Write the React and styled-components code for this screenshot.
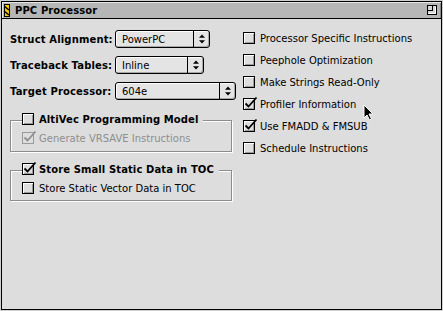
import React from "react";
import styled, { createGlobalStyle } from "styled-components";

const Global = createGlobalStyle`
  html, body { margin: 0; padding: 0; background: #cfcfcf; }
  body { font-family: "DejaVu Sans", sans-serif; font-size: 10px; color: #000; }
  * { box-sizing: border-box; }
`;

const Window = styled.div`
  position: relative;
  margin: 1px;
  width: 441px;
  height: 309px;
  border: 1px solid #000;
  background: #dddddd;
  display: flex;
  flex-direction: column;
`;

const TitleBar = styled.div`
  height: 17px;
  flex: none;
  background: #b6b6b6;
  border-bottom: 1px solid #000;
  box-shadow: inset 1px 1px 0 #e6e6e6, inset -1px 0 0 #8a8a8a;
  display: flex;
  align-items: center;
  padding: 0 4px 0 2px;
`;

const Title = styled.span`
  font-family: "DejaVu Sans", sans-serif;
  font-weight: bold;
  font-size: 10px;
  letter-spacing: 0.1px;
  margin-left: 5px;
  flex: 1;
`;

const Content = styled.div`
  flex: 1;
  display: flex;
  padding-left: 8px;
`;

const LeftCol = styled.div`
  width: 233px;
  padding-top: 11px;
  display: flex;
  flex-direction: column;
`;

const RightCol = styled.div`
  padding-top: 13px;
  display: flex;
  flex-direction: column;
  gap: 10px;
`;

const FormRow = styled.div`
  display: flex;
  align-items: center;
  height: 18px;
  margin-bottom: 8px;
`;

const Label = styled.span`
  width: 105px;
  font-weight: bold;
  font-size: 10px;
  letter-spacing: 0.15px;
  white-space: nowrap;
`;

const Popup = styled.div`
  width: ${(p) => p.$w}px;
  height: 18px;
  border: 1px solid #000;
  border-radius: 3px;
  background: #e4e4e4;
  box-shadow: inset 1px 1px 0 #fff, inset -1px -1px 0 #a8a8a8;
  display: flex;
  align-items: stretch;
`;

const PopupText = styled.span`
  flex: 1;
  padding-left: 6px;
  display: flex;
  align-items: center;
  font-size: 10px;
`;

const PopupArrow = styled.span`
  width: 16px;
  border-left: 1px solid #000;
  display: flex;
  align-items: center;
  justify-content: center;
`;

const Group = styled.div`
  position: relative;
  width: 222px;
  margin-top: ${(p) => p.$mt}px;
  border: 1px solid #8c8c8c;
  box-shadow: inset 1px 1px 0 #fff, 1px 1px 0 #fff;
  padding: 11px 0 ${(p) => p.$pb}px 11px;
`;

const GroupHeader = styled.div`
  position: absolute;
  top: -8px;
  left: 11px;
  background: #dddddd;
  padding-right: 5px;
  display: flex;
  align-items: center;
  gap: 5px;
  font-weight: bold;
  font-size: 10px;
  letter-spacing: 0.1px;
  white-space: nowrap;
`;

const CheckRow = styled.div`
  display: flex;
  align-items: center;
  gap: 5px;
  height: 12px;
  font-size: 10px;
  white-space: nowrap;
  color: ${(p) => (p.$disabled ? "#8e8e8e" : "#000")};
`;

const Box = styled.span`
  position: relative;
  flex: none;
  width: 12px;
  height: 12px;
  border: 1px solid ${(p) => (p.$disabled ? "#9a9a9a" : "#000")};
  background: #dedede;
  box-shadow: ${(p) =>
    p.$disabled ? "none" : "inset 1px 1px 0 #fff, inset -1px -1px 0 #9c9c9c"};
`;

const Tick = styled.svg`
  position: absolute;
  left: 0px;
  top: -3px;
`;

const Cursor = styled.svg`
  position: absolute;
  left: 361px;
  top: 102px;
`;

function Check({ checked, disabled }) {
  const c = disabled ? "#8e8e8e" : "#000";
  return (
    <Box $disabled={disabled}>
      {checked && (
        <Tick width="14" height="14" viewBox="0 0 14 14">
          <path d="M1.5 7.5 L4.5 10.5 L12.5 1.5" stroke={c} strokeWidth="1.8" fill="none" />
        </Tick>
      )}
    </Box>
  );
}

function CheckBox({ checked, disabled, children }) {
  return (
    <CheckRow $disabled={disabled}>
      <Check checked={checked} disabled={disabled} />
      <span>{children}</span>
    </CheckRow>
  );
}

function PopupButton({ w, value }) {
  return (
    <Popup $w={w}>
      <PopupText>{value}</PopupText>
      <PopupArrow>
        <svg width="6" height="10" viewBox="0 0 6 10">
          <polygon points="3,0.5 6,3.8 0,3.8" fill="#000" />
          <polygon points="0,6.2 6,6.2 3,9.5" fill="#000" />
        </svg>
      </PopupArrow>
    </Popup>
  );
}

export default function App() {
  return (
    <>
      <Global />
      <Window>
        <TitleBar>
          <svg width="6" height="13" viewBox="0 0 6 13">
            <rect x="0" y="0" width="6" height="13" fill="#f4c800" />
            <path d="M0 2 L5 6 M0 7 L5 11" stroke="#000" strokeWidth="1.6" />
            <rect x="0.5" y="0.5" width="5" height="12" fill="none" stroke="#000" strokeWidth="1" />
          </svg>
          <Title>PPC Processor</Title>
          <svg width="10" height="10" viewBox="0 0 10 10">
            <rect x="0.5" y="0.5" width="9" height="9" fill="#d8d8d8" stroke="#000" />
            <rect x="0.5" y="0.5" width="5" height="5" fill="#d8d8d8" stroke="#000" />
            <path d="M1.5 8.5 H8.5 V1.5" stroke="#fff" fill="none" />
          </svg>
        </TitleBar>
        <Content>
          <LeftCol>
            <FormRow>
              <Label>Struct Alignment:</Label>
              <PopupButton w={95} value="PowerPC" />
            </FormRow>
            <FormRow>
              <Label>Traceback Tables:</Label>
              <PopupButton w={89} value="Inline" />
            </FormRow>
            <FormRow>
              <Label>Target Processor:</Label>
              <PopupButton w={121} value="604e" />
            </FormRow>
            <Group $mt={12} $pb={7}>
              <GroupHeader>
                <Check />
                <span>AltiVec Programming Model</span>
              </GroupHeader>
              <CheckBox checked disabled>Generate VRSAVE Instructions</CheckBox>
            </Group>
            <Group $mt={18} $pb={6}>
              <GroupHeader>
                <Check checked />
                <span>Store Small Static Data in TOC</span>
              </GroupHeader>
              <CheckBox>Store Static Vector Data in TOC</CheckBox>
            </Group>
          </LeftCol>
          <RightCol>
            <CheckBox>Processor Specific Instructions</CheckBox>
            <CheckBox>Peephole Optimization</CheckBox>
            <CheckBox>Make Strings Read-Only</CheckBox>
            <CheckBox checked>Profiler Information</CheckBox>
            <CheckBox checked>Use FMADD &amp; FMSUB</CheckBox>
            <CheckBox>Schedule Instructions</CheckBox>
          </RightCol>
        </Content>
        <Cursor width="11" height="17" viewBox="0 0 11 17">
          <path d="M1 1 L1 14 L4 11 L6.5 16 L8.5 15 L6 10 L10 10 Z" fill="#000" stroke="#fff" strokeWidth="1" />
        </Cursor>
      </Window>
    </>
  );
}
